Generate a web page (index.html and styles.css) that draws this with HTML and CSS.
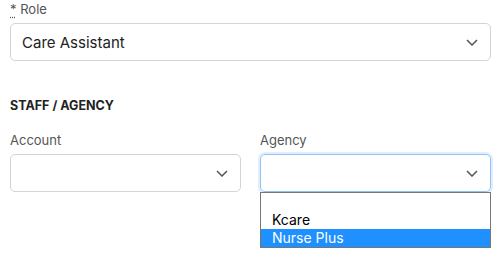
FILE: index.html
```html
<!doctype html>
<html lang="en">
    <head>
        <meta charset="UTF-8" />
        <meta name="viewport" content="width=device-width, initial-scale=1.0" />
        <title>Staff form</title>
        <link rel="stylesheet" href="styles.css">
    </head>
    <body>
        <div class="field">
            <label class="label"><abbr title="required">*</abbr> Role</label>
            <div class="select">
                <span class="value">Care Assistant</span>
                <svg class="chevron" width="12" height="7" viewBox="0 0 12 7"><path d="M1 1l5 5 5-5" fill="none" stroke="#555" stroke-width="1.5"/></svg>
            </div>
        </div>

        <h3 class="section">STAFF / AGENCY</h3>

        <div class="row">
            <div class="field">
                <label class="label">Account</label>
                <div class="select">
                    <span class="value"></span>
                    <svg class="chevron" width="12" height="7" viewBox="0 0 12 7"><path d="M1 1l5 5 5-5" fill="none" stroke="#555" stroke-width="1.5"/></svg>
                </div>
            </div>
            <div class="field agency">
                <label class="label">Agency</label>
                <div class="select focus">
                    <span class="value"></span>
                    <svg class="chevron" width="12" height="7" viewBox="0 0 12 7"><path d="M1 1l5 5 5-5" fill="none" stroke="#555" stroke-width="1.5"/></svg>
                </div>
                <div class="options">
                    <div class="option">&nbsp;</div>
                    <div class="option">Kcare</div>
                    <div class="option active">Nurse Plus</div>
                </div>
            </div>
        </div>
    </body>
</html>
```
FILE: styles.css
```css
html,
body {
    min-height: 256px;
}
body {
    font-family: Inter, "Noto Sans", sans-serif;
    margin: 0;
    padding: 1px 10px 0 10px;
    color: #222;
    background: #fff;
    box-sizing: border-box;
}
.field {
    display: flex;
    flex-direction: column;
}
.label {
    font-size: 13px;
    color: #555;
    line-height: 16px;
    margin-bottom: 6px;
}
.label abbr {
    text-decoration: underline dotted;
    text-underline-offset: 3px;
}
.select {
    height: 36px;
    border: 1px solid #d4d4d4;
    border-radius: 5px;
    display: flex;
    align-items: center;
    justify-content: space-between;
    padding: 0 12px 0 11px;
    font-size: 15px;
    color: #222;
}
.select.focus {
    border-color: #90c2f8;
    box-shadow: 0 0 0 2px #e2eefc;
}
.chevron {
    margin-top: 1px;
}
.section {
    font-size: 12.5px;
    font-weight: 700;
    color: #222;
    margin: 37px 0 18px 0;
    line-height: 16px;
}
.row {
    display: grid;
    grid-template-columns: 1fr 1fr;
    gap: 19px;
}
.agency {
    position: relative;
}
.options {
    position: absolute;
    z-index: 10;
    left: 0;
    right: 0;
    top: 60px;
    background: #fff;
    border: 1px solid #767676;
    font-size: 14px;
}
.option {
    height: 18px;
    line-height: 18px;
    padding: 0 11px;
    color: #000;
}
.option.active {
    background: #1e90ff;
    color: #fff;
}
```
